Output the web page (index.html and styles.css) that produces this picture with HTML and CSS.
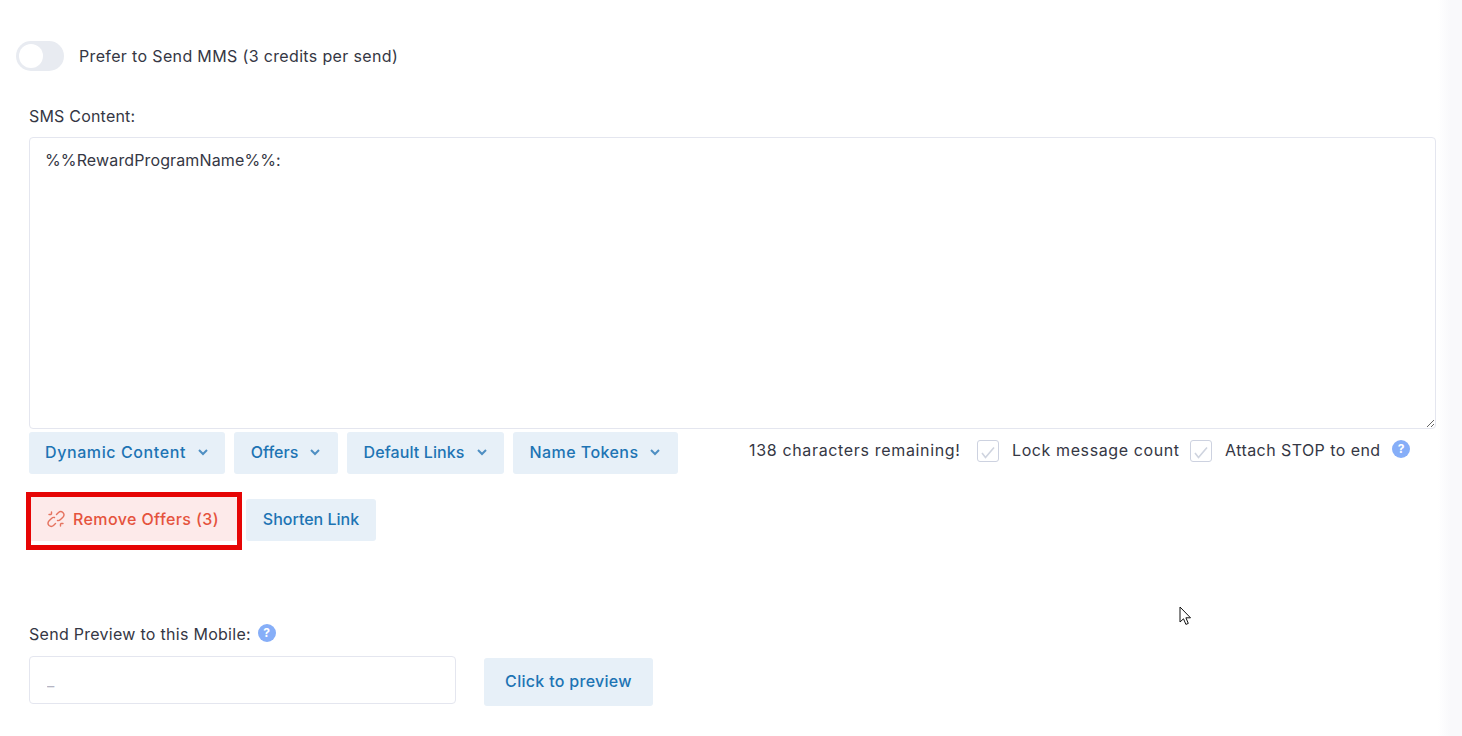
FILE: index.html
```html
<!DOCTYPE html>
<html lang="en">
<head>
<meta charset="utf-8">
<title>SMS Content</title>
<link rel="stylesheet" href="styles.css">
</head>
<body>
<main class="page">
  <div class="toggle-row">
    <span class="toggle"><span class="knob"></span></span>
    <span class="toggle-label">Prefer to Send MMS (3 credits per send)</span>
  </div>

  <label class="field-label sms-label" for="sms">SMS Content:</label>
  <textarea class="sms-box" id="sms">%%RewardProgramName%%:</textarea>

  <div class="tools-row">
    <div class="btn-group">
      <button class="btn btn-menu w-dynamic">Dynamic Content <svg class="chev" viewBox="0 0 12 8"><path d="M2 2l4 4 4-4"/></svg></button>
      <button class="btn btn-menu w-offers">Offers <svg class="chev" viewBox="0 0 12 8"><path d="M2 2l4 4 4-4"/></svg></button>
      <button class="btn btn-menu w-links">Default Links <svg class="chev" viewBox="0 0 12 8"><path d="M2 2l4 4 4-4"/></svg></button>
      <button class="btn btn-menu w-tokens">Name Tokens <svg class="chev" viewBox="0 0 12 8"><path d="M2 2l4 4 4-4"/></svg></button>
    </div>
    <div class="status">
      <span class="remaining">138 characters remaining!</span>
      <span class="check"><svg viewBox="0 0 20 20"><path d="M4 12l3.500 4.500L16 6.500"/></svg></span>
      <span class="check-label lock">Lock message count</span>
      <span class="check"><svg viewBox="0 0 20 20"><path d="M4 12l3.500 4.500L16 6.500"/></svg></span>
      <span class="check-label stop">Attach STOP to end</span>
      <span class="help help-status">?</span>
    </div>
  </div>

  <div class="actions-row">
    <div class="highlighted">
      <button class="btn btn-danger">
        <svg class="unlink" viewBox="0 0 18 18"><path d="M9.5 4.5l2-2a3.4 3.4 0 0 1 4.400 0 3.400 3.400 0 0 1 0 4.700l-2.400 2.400a3.300 3.300 0 0 1-3 .9"/><path d="M8.500 13.500l-2 2a3.400 3.400 0 0 1-4.400 0 3.400 3.400 0 0 1 0-4.700l2.400-2.400a3.300 3.300 0 0 1 3-.9"/><path d="M4.500 2v2M2 4.500h2M13.500 16v-2M16 13.500h-2"/></svg>
        Remove Offers (3)
      </button>
      <span class="highlight-frame"></span>
    </div>
    <button class="btn btn-shorten">Shorten Link</button>
  </div>

  <div class="preview-label field-label">Send Preview to this Mobile: <span class="help help-small">?</span></div>
  <div class="preview-row">
    <input class="mobile-input" type="text" placeholder="_">
    <button class="btn btn-preview">Click to preview</button>
  </div>
</main>
<svg class="cursor" viewBox="0 0 13 20"><path d="M1 1v15l3.500-3.200 2.400 5.600 2.400-1-2.400-5.600h4.600z"/></svg>
</body>
</html>
```

FILE: styles.css
```css
* { box-sizing: border-box; }
html, body { margin: 0; height: 736px; overflow: hidden; }
body {
  position: relative;
  background: linear-gradient(to right, #fff 1438px, #f9f9fb 1450px);
  color: #353744;
  font-family: "Inter", "Liberation Sans", sans-serif;
  font-size: 16px;
}
.page { width: 1436px; padding: 41px 0 0 29px; }

.toggle-row { display: flex; align-items: center; height: 30px; margin-left: -13px; gap: 15px; }
.toggle { width: 48px; height: 30px; border-radius: 15px; background: #e8ebf1; padding: 3px; display: block; }
.knob { display: block; width: 24px; height: 24px; border-radius: 50%; background: #fff; }
.toggle-label { font-size: 16px; letter-spacing: .35px; }

.field-label { display: block; font-size: 16px; }
.sms-label { margin-top: 34px; height: 22px; line-height: 22px; letter-spacing: .2px; }
.sms-box {
  display: block; width: 100%; height: 292px; margin-top: 10px;
  border: 1px solid #e4e6ef; border-radius: 4px; padding: 12px 15px;
  font: 16px/20px "Inter", "Liberation Sans", sans-serif; letter-spacing: .13px; color: #353744; outline: 0; background: #fff;
}

.tools-row { display: flex; margin-top: 3px; height: 42px; }
.btn-group { display: flex; gap: 9px; }
.btn {
  border: 0; border-radius: 3px; height: 42px; padding: 0 0 2px;
  display: inline-flex; align-items: center; justify-content: center;
  background: #e7f0f8; color: #1d74b4;
  font: 450 16px "Inter", "Liberation Sans", sans-serif;
}
.btn-menu { gap: 11px; }
.w-dynamic { width: 196px; letter-spacing: .6px; }
.w-offers { width: 104px; }
.w-links { width: 157px; letter-spacing: .1px; }
.w-tokens { width: 165px; letter-spacing: .43px; }
.chev { width: 12px; height: 8px; fill: none; stroke: #4e8fc3; stroke-width: 2; }

.status { display: flex; align-items: flex-start; margin-left: 71px; padding-top: 7px; height: 42px; font-size: 16px; line-height: 22px; white-space: nowrap; }
.remaining { width: 228px; letter-spacing: .66px; }
.check { display: block; width: 22px; height: 22px; margin-top: 1px; border: 1px solid #cdd2e0; border-radius: 3px; background: #fff; }
.check svg { display: block; width: 20px; height: 20px; fill: none; stroke: #cfd4df; stroke-width: 1.6; }
.check-label { padding-left: 13px; }
.lock { width: 191px; letter-spacing: .6px; }
.stop { width: 180px; letter-spacing: .43px; }
.help {
  display: inline-block; width: 18px; height: 18px; border-radius: 50%;
  background: #86aef8; color: #fff; font: 700 12px/18px "Inter", sans-serif; text-align: center; letter-spacing: 0;
}
.help-status { margin-top: 1px; }
.help-small { margin-left: 2px; vertical-align: 3px; }

.actions-row { display: flex; align-items: flex-end; margin-top: 23px; }
.highlighted { position: relative; margin-right: 9px; }
.btn-danger { width: 208px; height: 44px; background: #fdeaea; color: #e5533d; gap: 8px; padding: 0; letter-spacing: .4px; }
.highlight-frame { position: absolute; left: -3px; top: -5px; width: 216px; height: 58px; border: 5px solid #e60505; pointer-events: none; }
.unlink { width: 18px; height: 18px; fill: none; stroke: #e5735f; stroke-width: 1.4; stroke-linecap: round; }
.btn-shorten { width: 130px; }

.preview-label { margin-top: 82px; height: 22px; line-height: 22px; letter-spacing: .28px; }
.preview-row { display: flex; align-items: flex-start; margin-top: 11px; }
.mobile-input { width: 427px; height: 48px; border: 1px solid #e4e6ef; border-radius: 4px; padding: 0 17px; font: 16px "Inter", sans-serif; outline: 0; background: #fff; }
.mobile-input::placeholder { color: #b5b5c3; }
.btn-preview { width: 169px; height: 48px; margin: 2px 0 0 28px; letter-spacing: .3px; }

.cursor { position: absolute; left: 1179px; top: 606px; width: 13px; height: 20px; fill: #fff; stroke: #111; stroke-width: 1; }
```
